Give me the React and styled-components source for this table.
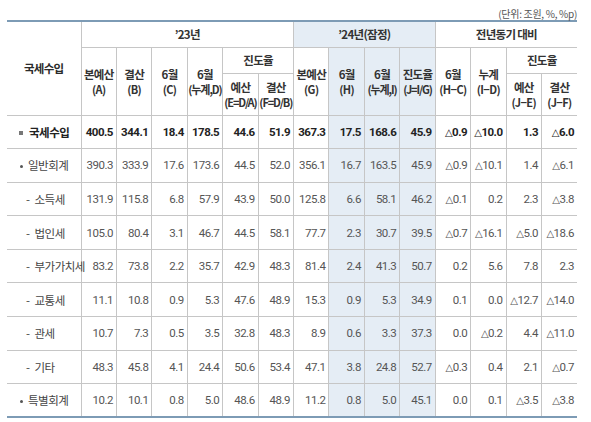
import React from "react";
import styled, { createGlobalStyle } from "styled-components";

const Global = createGlobalStyle`
  html, body { margin: 0; padding: 0; background: #fff; }
  body { font-family: Roboto, "Noto Sans CJK KR", sans-serif; }
`;

const Page = styled.div`
  width: 570px;
  padding: 0 14px 0 7px;
`;

const Unit = styled.div`
  height: 20px;
  box-sizing: border-box;
  padding-top: 8px;
  text-align: right;
  font-family: "Noto Sans CJK KR", sans-serif;
  font-size: 10px;
  line-height: 12px;
  color: #555;
  letter-spacing: -0.3px;
`;

const Table = styled.table`
  width: 570px;
  table-layout: fixed;
  border-collapse: collapse;
  border-top: 2px solid #7d9bb5;
  border-bottom: 2px solid #7d9bb5;
`;

const Th = styled.th`
  border: 1px solid #c6c6c6;
  padding: 0;
  font-family: "Noto Sans CJK KR", sans-serif;
  font-weight: 600;
  font-size: 11.5px;
  line-height: 15px;
  color: #333;
  letter-spacing: -0.7px;
  text-align: center;
  vertical-align: middle;
  white-space: nowrap;
  overflow: visible;
  background: ${(p) => (p.$shade ? "#e5edf5" : "#fff")};
  &:first-child { border-left: none; }
  &:last-child { border-right: none; }
`;

const LabelTh = styled(Th)`
  font-weight: 700;
  font-size: 11.5px;
  color: #2b2b2b;
  border-left: none;
`;

const Sub = styled.span`
  display: block;
  font-size: 11px;
  letter-spacing: ${(p) => (p.$long ? "-1.1px" : "-0.6px")};
  line-height: 14px;
`;

const HeadRow = styled.tr`
  height: ${(p) => p.$h}px;
`;

const Row = styled.tr`
  height: 33.6px;
`;

const Td = styled.td`
  border: 1px solid #c6c6c6;
  padding: 0 3px 0 0;
  text-align: right;
  vertical-align: middle;
  font-family: Roboto, "Noto Sans CJK KR", sans-serif;
  font-size: 11.5px;
  letter-spacing: -0.5px;
  color: ${(p) => (p.$bold ? "#222" : "#555")};
  font-weight: ${(p) => (p.$bold ? 700 : 400)};
  background: ${(p) => (p.$shade ? "#e5edf5" : "#fff")};
  white-space: nowrap;
  &:last-child { border-right: none; }
`;

const LabelTd = styled.td`
  border: 1px solid #c6c6c6;
  border-left: none;
  padding: 0 0 0 ${(p) => (p.$level === 2 ? 19 : 12)}px;
  text-align: left;
  vertical-align: middle;
  font-family: "Noto Sans CJK KR", sans-serif;
  font-size: 11.5px;
  letter-spacing: -0.5px;
  color: ${(p) => (p.$bold ? "#222" : "#444")};
  font-weight: ${(p) => (p.$bold ? 600 : 400)};
  white-space: nowrap;
`;

const Square = styled.span`
  display: inline-block;
  width: 4px;
  height: 4px;
  background: #777;
  margin-right: 6px;
  vertical-align: 2px;
`;

const Dot = styled.span`
  display: inline-block;
  width: 3px;
  height: 3px;
  border-radius: 50%;
  background: #555;
  margin: 0 5px 0 1px;
  vertical-align: 2px;
`;

const Dash = styled.span`
  margin-right: 5px;
`;

const Tri = styled.span`
  font-family: "DejaVu Sans", sans-serif;
  font-size: 10px;
  font-weight: 400;
`;

const Num = ({ v }) => {
  if (typeof v === "string" && v.startsWith("-")) {
    return (
      <>
        <Tri>△</Tri>
        {v.slice(1)}
      </>
    );
  }
  return <>{v}</>;
};

const rows = [
  { label: "국세수입", kind: "sq", bold: true, v: ["400.5", "344.1", "18.4", "178.5", "44.6", "51.9", "367.3", "17.5", "168.6", "45.9", "-0.9", "-10.0", "1.3", "-6.0"] },
  { label: "일반회계", kind: "dot", v: ["390.3", "333.9", "17.6", "173.6", "44.5", "52.0", "356.1", "16.7", "163.5", "45.9", "-0.9", "-10.1", "1.4", "-6.1"] },
  { label: "소득세", kind: "dash", v: ["131.9", "115.8", "6.8", "57.9", "43.9", "50.0", "125.8", "6.6", "58.1", "46.2", "-0.1", "0.2", "2.3", "-3.8"] },
  { label: "법인세", kind: "dash", v: ["105.0", "80.4", "3.1", "46.7", "44.5", "58.1", "77.7", "2.3", "30.7", "39.5", "-0.7", "-16.1", "-5.0", "-18.6"] },
  { label: "부가가치세", kind: "dash", v: ["83.2", "73.8", "2.2", "35.7", "42.9", "48.3", "81.4", "2.4", "41.3", "50.7", "0.2", "5.6", "7.8", "2.3"] },
  { label: "교통세", kind: "dash", v: ["11.1", "10.8", "0.9", "5.3", "47.6", "48.9", "15.3", "0.9", "5.3", "34.9", "0.1", "0.0", "-12.7", "-14.0"] },
  { label: "관세", kind: "dash", v: ["10.7", "7.3", "0.5", "3.5", "32.8", "48.3", "8.9", "0.6", "3.3", "37.3", "0.0", "-0.2", "4.4", "-11.0"] },
  { label: "기타", kind: "dash", v: ["48.3", "45.8", "4.1", "24.4", "50.6", "53.4", "47.1", "3.8", "24.8", "52.7", "-0.3", "0.4", "2.1", "-0.7"] },
  { label: "특별회계", kind: "dot", v: ["10.2", "10.1", "0.8", "5.0", "48.6", "48.9", "11.2", "0.8", "5.0", "45.1", "0.0", "0.1", "-3.5", "-3.8"] },
];

// value indices: A0 B1 C2 D3 E4 F5 G6 H7 I8 J9 ...
const shadedCol = (i) => i >= 7 && i <= 9;

const Two = ({ a, b }) => (
  <>
    {a}
    <Sub $long={b.length >= 6}>{b}</Sub>
  </>
);

export default function App() {
  return (
    <>
      <Global />
      <Page>
        <Unit>(단위: 조원, %, %p)</Unit>
        <Table>
          <colgroup>
            <col style={{ width: "74px" }} />
            {Array.from({ length: 14 }).map((_, i) => (
              <col key={i} />
            ))}
          </colgroup>
          <thead>
            <HeadRow $h={26}>
              <LabelTh rowSpan={3}>국세수입</LabelTh>
              <Th colSpan={6}>’23년</Th>
              <Th colSpan={4} $shade>’24년(잠정)</Th>
              <Th colSpan={4}>전년동기 대비</Th>
            </HeadRow>
            <HeadRow $h={26}>
              <Th rowSpan={2}><Two a="본예산" b="(A)" /></Th>
              <Th rowSpan={2}><Two a="결산" b="(B)" /></Th>
              <Th rowSpan={2}><Two a="6월" b="(C)" /></Th>
              <Th rowSpan={2}><Two a="6월" b="(누계,D)" /></Th>
              <Th colSpan={2}>진도율</Th>
              <Th rowSpan={2}><Two a="본예산" b="(G)" /></Th>
              <Th rowSpan={2} $shade><Two a="6월" b="(H)" /></Th>
              <Th rowSpan={2} $shade><Two a="6월" b="(누계,I)" /></Th>
              <Th rowSpan={2} $shade><Two a="진도율" b="(J=I/G)" /></Th>
              <Th rowSpan={2}><Two a="6월" b="(H−C)" /></Th>
              <Th rowSpan={2}><Two a="누계" b="(I−D)" /></Th>
              <Th colSpan={2}>진도율</Th>
            </HeadRow>
            <HeadRow $h={42}>
              <Th><Two a="예산" b="(E=D/A)" /></Th>
              <Th><Two a="결산" b="(F=D/B)" /></Th>
              <Th><Two a="예산" b="(J−E)" /></Th>
              <Th><Two a="결산" b="(J−F)" /></Th>
            </HeadRow>
          </thead>
          <tbody>
            {rows.map((r) => (
              <Row key={r.label}>
                <LabelTd $bold={r.bold} $level={r.kind === "dash" ? 2 : 1}>
                  {r.kind === "sq" && <Square />}
                  {r.kind === "dot" && <Dot />}
                  {r.kind === "dash" && <Dash>-</Dash>}
                  {r.label}
                </LabelTd>
                {r.v.map((v, i) => (
                  <Td key={i} $bold={r.bold} $shade={shadedCol(i)}>
                    <Num v={v} />
                  </Td>
                ))}
              </Row>
            ))}
          </tbody>
        </Table>
      </Page>
    </>
  );
}
